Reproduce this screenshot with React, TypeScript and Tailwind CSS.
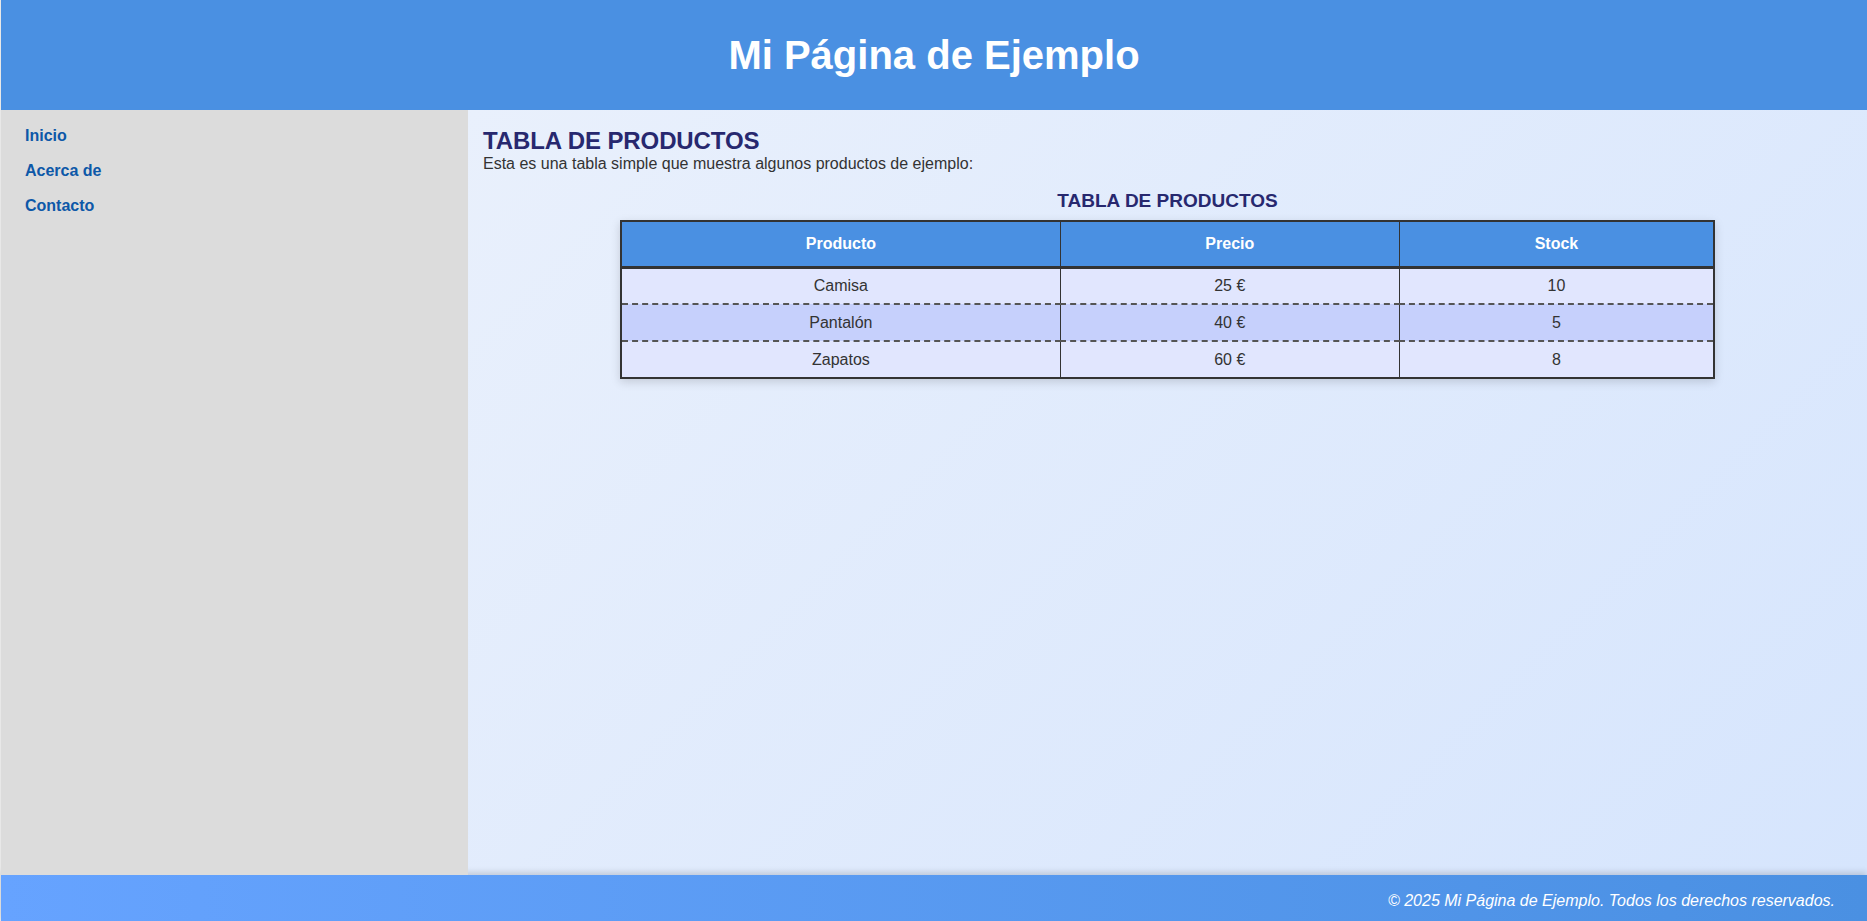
const productos = [
  { nombre: "Camisa", precio: "25 €", stock: 10 },
  { nombre: "Pantalón", precio: "40 €", stock: 5 },
  { nombre: "Zapatos", precio: "60 €", stock: 8 },
]

const links = ["Inicio", "Acerca de", "Contacto"]

export default function App() {
  return (
    <div
      className="min-h-screen flex flex-col border-l border-[#e8e8e8] text-[#333]"
      style={{ fontFamily: "'Liberation Sans', Arial, sans-serif" }}
    >
      {/* Header */}
      <header className="h-[110px] bg-[#4a90e2] flex items-center justify-center flex-shrink-0">
        <h1 className="text-[40px] font-bold text-white leading-none">Mi Página de Ejemplo</h1>
      </header>

      <div className="flex flex-1">
        {/* Sidebar */}
        <nav className="relative z-10 w-[467px] bg-[#dcdcdc] flex-shrink-0 px-6 pt-[17px]">
          <ul className="flex flex-col gap-[17px]">
            {links.map((l) => (
              <li key={l} className="leading-[18px]">
                <a href="#" className="text-[16px] font-bold text-[#0d58a8] leading-[18px]">{l}</a>
              </li>
            ))}
          </ul>
        </nav>

        {/* Main */}
        <main className="flex-1 px-[15px] pt-[16px] bg-[linear-gradient(135deg,#e9f0fc_0%,#d6e5fd_100%)]">
          <h2 className="text-[24px] font-bold text-[#27286f] leading-[29px] tracking-[-0.1px]">TABLA DE PRODUCTOS</h2>
          <p className="text-[16px] leading-[18px] text-[#333]">
            Esta es una tabla simple que muestra algunos productos de ejemplo:
          </p>

          <table className="w-[80%] mx-auto mt-[17px] border-collapse border-2 border-[#333] shadow-[0_3px_9px_rgba(0,0,0,0.15)]">
            <caption className="text-[19px] font-bold text-[#27286f] leading-[22px] pb-[8px]">TABLA DE PRODUCTOS</caption>
            <thead>
              <tr className="bg-[#4a90e2] text-white h-[46px] border-b-[3px] border-[#333]">
                <th className="w-[40.2%] border-r border-[#333] font-bold text-[16px]">Producto</th>
                <th className="w-[31%] border-r border-[#333] font-bold text-[16px]">Precio</th>
                <th className="font-bold text-[16px]">Stock</th>
              </tr>
            </thead>
            <tbody>
              {productos.map((p, i) => (
                <tr
                  key={p.nombre}
                  className={`h-[37px] text-center text-[16px] ${i % 2 === 1 ? "bg-[#c6d0fc]" : "bg-[#e1e6fe]"} ${i < productos.length - 1 ? "border-b-2 border-dashed border-[#555]" : ""}`}
                >
                  <td className="border-r border-[#333]">{p.nombre}</td>
                  <td className="border-r border-[#333]">{p.precio}</td>
                  <td>{p.stock}</td>
                </tr>
              ))}
            </tbody>
          </table>
        </main>
      </div>

      {/* Footer */}
      <footer className="h-[46px] flex-shrink-0 flex items-center justify-end pr-[32px] pt-[6px] bg-[linear-gradient(90deg,#66a3ff_0%,#4a90e2_100%)] shadow-[0_-3px_6px_rgba(0,0,0,0.14)]">
        <p className="italic text-white text-[16px] leading-[18px]">© 2025 Mi Página de Ejemplo. Todos los derechos reservados.</p>
      </footer>
    </div>
  )
}
